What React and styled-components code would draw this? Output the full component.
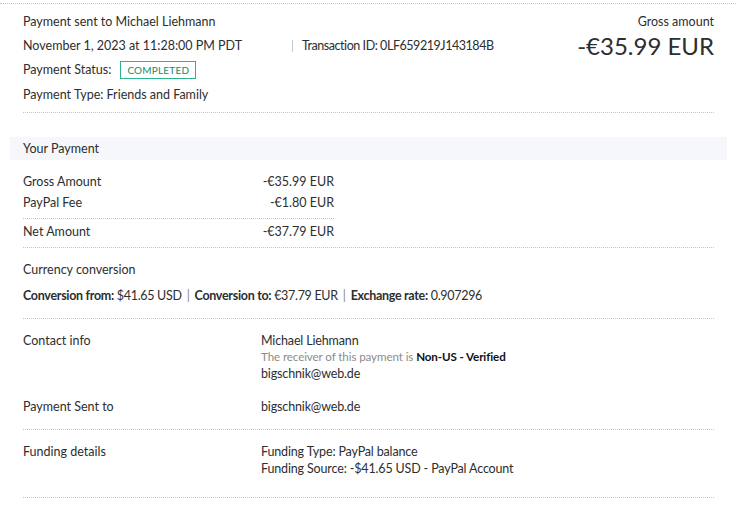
import styled, { createGlobalStyle } from 'styled-components';

const GlobalStyle = createGlobalStyle`
  body {
    margin: 0;
    background: #ffffff;
    font-family: 'Lato', 'Noto Sans', sans-serif;
    color: #2c2e2f;
  }
`;

const Page = styled.div`
  padding-top: 3px;
  width: 736px;
`;

const TopRule = styled.div`
  border-top: 1px dotted #c4c4c4;
`;

const Content = styled.div`
  padding: 0 22px 0 23px;
`;

const Header = styled.section`
  display: flex;
  justify-content: space-between;
  padding: 5px 0 5px;
  border-bottom: 1px dotted #c4c4c4;
`;

const Lines = styled.div`
  display: flex;
  flex-direction: column;
`;

const Line = styled.div`
  display: flex;
  align-items: center;
  height: 24.4px;
  font-size: 12.5px;
`;

const DateText = styled.span`
  width: 269px;
`;

const TxnId = styled.span`
  border-left: 1px solid #c9c9c9;
  padding-left: 9px;
  line-height: 12px;
  letter-spacing: -0.45px;
`;

const Badge = styled.span`
  margin-left: 9px;
  border: 1px solid #2bb58f;
  color: #168a6a;
  font-size: 10px;
  letter-spacing: 0.2px;
  padding: 2px 6px 1px;
  line-height: 13px;
`;

const Summary = styled.div`
  display: flex;
  flex-direction: column;
  align-items: flex-end;
`;

const SummaryLabel = styled.div`
  font-size: 12.5px;
  height: 24px;
  line-height: 26px;
`;

const BigAmount = styled.div`
  font-size: 24px;
  line-height: 26px;
  font-weight: 400;
  color: #2c2e2f;
`;

const Band = styled.div`
  margin: 24px -13px 0;
  padding: 0 13px;
  height: 23px;
  display: flex;
  align-items: center;
  background: #f5f7fa;
  font-size: 12.5px;
`;

const Breakdown = styled.section`
  padding-top: 11px;
  padding-bottom: 3px;
  border-bottom: 1px dotted #c4c4c4;
`;

const AmountRow = styled.div`
  width: 311px;
  display: flex;
  justify-content: space-between;
  align-items: center;
  height: ${(p) => (p.$total ? '25px' : '21px')};
  font-size: 12.5px;
  border-top: ${(p) => (p.$total ? '1px dotted #c4c4c4' : 'none')};
  margin-top: ${(p) => (p.$total ? '5.5px' : '0')};
`;

const Conversion = styled.section`
  padding: 14px 0 14px;
  border-bottom: 1px dotted #c4c4c4;
  font-size: 12.5px;
`;

const ConvTitle = styled.div`
  height: 16px;
  line-height: 16px;
`;

const ConvLine = styled.div`
  margin-top: 10px;
  line-height: 16px;
  letter-spacing: -0.3px;
  b {
    font-weight: 700;
  }
`;

const Pipe = styled.span`
  color: #8a8a8a;
  margin: 0 5px;
`;

const InfoBlock = styled.section`
  display: grid;
  grid-template-columns: 238px 1fr;
  padding: ${(p) => p.$pad || '13px 0 14px'};
  border-bottom: ${(p) => (p.$noRule ? 'none' : '1px dotted #c4c4c4')};
  font-size: 12.5px;
  line-height: 17px;
`;

const InfoValue = styled.div`
  display: flex;
  flex-direction: column;
  letter-spacing: -0.15px;
`;

const Muted = styled.span`
  color: #8c8c8c;
  font-size: 11.6px;
  line-height: 16px;
  letter-spacing: -0.1px;
  b {
    color: #111;
    font-weight: 700;
  }
`;

const App = () => {
  return (
    <Page>
      <GlobalStyle />
      <TopRule />
      <Content>
        <Header>
          <Lines>
            <Line>Payment sent to Michael Liehmann</Line>
            <Line>
              <DateText>November 1, 2023 at 11:28:00 PM PDT</DateText>
              <TxnId>Transaction ID: 0LF659219J143184B</TxnId>
            </Line>
            <Line>
              Payment Status:
              <Badge>COMPLETED</Badge>
            </Line>
            <Line>Payment Type: Friends and Family</Line>
          </Lines>
          <Summary>
            <SummaryLabel>Gross amount</SummaryLabel>
            <BigAmount>-€35.99 EUR</BigAmount>
          </Summary>
        </Header>

        <Band>Your Payment</Band>
        <Breakdown>
          <AmountRow>
            <span>Gross Amount</span>
            <span>-€35.99 EUR</span>
          </AmountRow>
          <AmountRow>
            <span>PayPal Fee</span>
            <span>-€1.80 EUR</span>
          </AmountRow>
          <AmountRow $total>
            <span>Net Amount</span>
            <span>-€37.79 EUR</span>
          </AmountRow>
        </Breakdown>

        <Conversion>
          <ConvTitle>Currency conversion</ConvTitle>
          <ConvLine>
            <b>Conversion from:</b> $41.65 USD
            <Pipe>|</Pipe>
            <b>Conversion to:</b> €37.79 EUR
            <Pipe>|</Pipe>
            <b>Exchange rate:</b> 0.907296
          </ConvLine>
        </Conversion>

        <InfoBlock $pad="13px 0 0" $noRule>
          <div>Contact info</div>
          <InfoValue>
            <span>Michael Liehmann</span>
            <Muted>
              The receiver of this payment is <b>Non-US - Verified</b>
            </Muted>
            <span>bigschnik@web.de</span>
          </InfoValue>
        </InfoBlock>
        <InfoBlock $pad="16px 0 14px">
          <div>Payment Sent to</div>
          <InfoValue>
            <span>bigschnik@web.de</span>
          </InfoValue>
        </InfoBlock>
        <InfoBlock $pad="13px 0 20px">
          <div>Funding details</div>
          <InfoValue>
            <span>Funding Type: PayPal balance</span>
            <span>Funding Source: -$41.65 USD - PayPal Account</span>
          </InfoValue>
        </InfoBlock>
      </Content>
    </Page>
  );
};

export default App;
